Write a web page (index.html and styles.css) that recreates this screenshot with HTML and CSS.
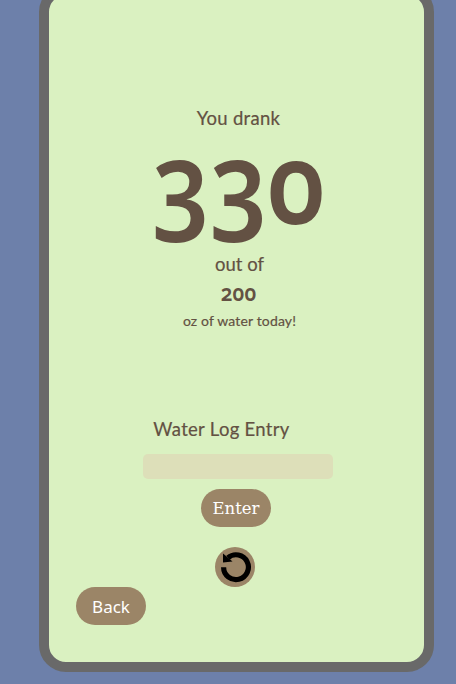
FILE: index.html
```
<!DOCTYPE html>
<html lang="en">
<head>
<meta charset="utf-8">
<title>Water Log</title>
<link rel="stylesheet" href="styles.css">
</head>

<body>
<div class="phone">
	<div class="progress">
		<p class="drank">You drank</p>
		<h1 class="total">330</h1>
		<p class="out-of">out of</p>
		<p class="goal">200</p>
		<p class="unit">oz of water today!</p>
	</div>
	<form class="entry">
		<label class="entry-label" for="ounces">Water Log Entry</label>
		<input class="entry-input" type="text" id="ounces">
		<button class="btn btn-enter" type="button">Enter</button>
		<button class="reset" type="button" aria-label="Reset">
			<svg class="reset-icon" viewBox="0 0 40 40">
				<path d="M8.6 20.2A12.4 12.4 0 1 0 13 10.7" fill="none" stroke="#000" stroke-width="5.2"/>
				<path d="M8 6.5V15.4L17.5 14.6Z"/>
			</svg>
		</button>
	</form>
	<button class="btn btn-back" type="button">Back</button>
</div>
</body>
</html>
```
FILE: styles.css
```
* {box-sizing: border-box;}
body,h1,p {margin: 0;padding: 0;}
body {height: 684px;overflow: hidden;background-color: #6d80aa;display: flow-root;}
button,input {border: 0 none;margin: 0;padding: 0;}
.phone {width: 395px;height: 687px;margin: -15px 0 0 39px;border: 10px solid #696969;border-radius: 27px;background-color: #daf1c1;color: #635143;font-family: "Lato", sans-serif;overflow: hidden;}
.progress {padding: 111px 0 0 4px;text-align: center;}
.drank,
.out-of,
.entry-label {font-size: 18.5px;line-height: 24px;letter-spacing: .3px;-webkit-text-stroke: .2px #635143;}
.total {height: 122px;line-height: 100px;font-family: "Noto Sans", sans-serif;font-size: 113px;font-weight: 600;font-variant-numeric: oldstyle-nums;transform: scaleX(.9);}
.out-of {letter-spacing: 0;padding-left: 2px;}
.goal {height: 35px;line-height: 32px;font-family: "Noto Sans", sans-serif;font-size: 23px;font-weight: 600;font-variant-numeric: oldstyle-nums;transform: scaleX(.9);}
.unit {padding-left: 2px;font-size: 14px;line-height: 20px;letter-spacing: .15px;-webkit-text-stroke: .2px #635143;}
.entry {display: flex;flex-direction: column;align-items: center;padding-top: 86px;}
.entry-label {margin-right: 30px;}
.entry-input {width: 190px;height: 25px;margin: 13px 0 10px 3px;border-radius: 5px;background-color: #dddfb9;}
.btn {display: block;width: 70px;height: 38px;border-radius: 19px;background-color: #9b8567;color: #fff;}
.btn-enter {margin-right: 1px;font-family: "DejaVu Serif", serif;font-size: 16.5px;}
.btn-back {margin-left: 27px;font-family: "Noto Sans", sans-serif;font-size: 17px;}
.reset {width: 40px;height: 40px;margin: 20px 3px 0 0;border-radius: 50%;background-color: #9b8567;}
.reset-icon {display: block;width: 40px;height: 40px;}
```
